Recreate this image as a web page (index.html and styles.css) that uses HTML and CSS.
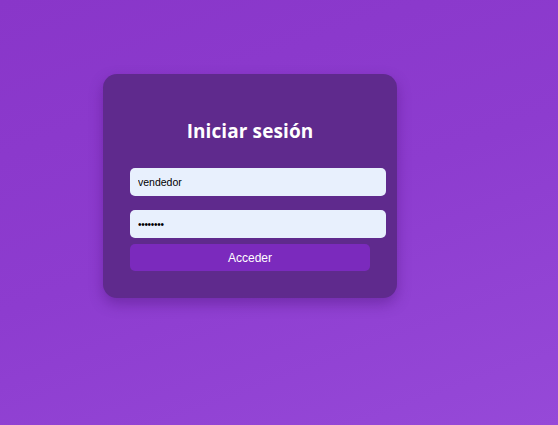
FILE: index.html
```html
<!DOCTYPE html>
<html lang="es">
<head>
<meta charset="utf-8">
<title>Iniciar sesión</title>
<link rel="stylesheet" href="styles.css">
</head>
<body>
<main class="page">
  <form class="card">
    <h2 class="title">Iniciar sesión</h2>
    <input class="field" type="text" value="vendedor">
    <input class="field field-pass" type="password" value="12345678">
    <button class="btn" type="button">Acceder</button>
  </form>
</main>
</body>
</html>
```
FILE: styles.css
```css
* { box-sizing: content-box; }
html, body { margin: 0; height: 100%; }
body {
  background: linear-gradient(160deg, #8936c9 0%, #8d3ccf 50%, #9649d8 100%);
  font-family: "Liberation Sans", Arial, sans-serif;
}
.page {
  padding: 74px 0 0 103px;
}
.card {
  width: 240px;
  height: 177px;
  padding: 47px 27px 0 27px;
  background: #5f2a8d;
  border-radius: 14px;
  box-shadow: 0 6px 14px rgba(60, 10, 100, 0.35);
  display: flex;
  flex-direction: column;
  align-items: flex-start;
}
.title {
  align-self: stretch;
  margin: 0 0 27px 0;
  text-align: center;
  color: #ffffff;
  font-family: "Open Sans", sans-serif;
  font-weight: 700;
  font-size: 19px;
  line-height: 20px;
  letter-spacing: 0.1px;
}
.field {
  width: 240px;
  height: 28px;
  padding: 0 8px;
  margin: 0 0 14px 0;
  border: none;
  border-radius: 5px;
  background: #e8f0fd;
  color: #000;
  font-family: "Liberation Sans", Arial, sans-serif;
  font-size: 10.5px;
  outline: none;
}
.field-pass { margin-bottom: 6px; font-size: 10px; letter-spacing: -0.3px; }
.btn {
  width: 240px;
  height: 27px;
  padding: 0;
  border: none;
  border-radius: 5px;
  background: #7b2abd;
  color: #ffffff;
  font-family: "Liberation Sans", Arial, sans-serif;
  font-size: 12px;
}
```
